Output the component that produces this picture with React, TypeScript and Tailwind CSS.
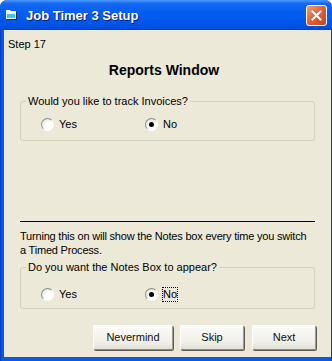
import React from "react";

function Radio({ label, checked, focused }: { label: string; checked?: boolean; focused?: boolean }) {
  return (
    <label className="flex items-center gap-[5px] h-[14px]">
      <span className="w-[13px] h-[13px] rounded-full border border-t-[#8f8d85] border-l-[#8f8d85] border-b-white border-r-white bg-[radial-gradient(circle_at_70%_70%,#ffffff_40%,#dcdad2)] flex items-center justify-center">
        {checked && <span className="w-[5px] h-[5px] rounded-full bg-black" />}
      </span>
      <span className={focused ? "outline outline-1 outline-dotted outline-black leading-[13px]" : "leading-[13px]"}>{label}</span>
    </label>
  );
}

function Group({ title, children, rowTop }: { title: string; children: React.ReactNode; rowTop: string }) {
  return (
    <fieldset className="border border-[#d0d0bf] rounded-[3px] mx-[16px] w-[295px]">
      <legend className="ml-[5px] px-[2px] leading-[14px]">{title}</legend>
      <div className={`flex pl-[20px] ${rowTop}`}>{children}</div>
    </fieldset>
  );
}

function XpButton({ children, w }: { children: React.ReactNode; w: string }) {
  return (
    <button className={`${w} h-[25px] bg-[linear-gradient(to_bottom,#fbfbf9,#f0efe8_70%,#e3e1d6)] border border-t-white border-l-white border-r-[#9d9b90] border-b-[#8a887e] shadow-[1px_1px_0_#5f5d55] rounded-[2px] text-[11px] font-normal text-[#111]`}>
      {children}
    </button>
  );
}

export default function App() {
  return (
    <div className="w-[332px] h-[361px] flex flex-col rounded-t-[7px] bg-[#0842d4] overflow-hidden font-['Liberation_Sans',Arial,sans-serif] text-black text-[11px]">
      {/* title bar */}
      <div className="h-[30px] shrink-0 flex items-center pl-[6px] pr-[5px] bg-[linear-gradient(to_bottom,#4a98ff,#1468f0_12%,#0860f2_35%,#0058ee_65%,#0052e4_88%,#0042cf)]">
        <svg width="12" height="11" viewBox="0 0 12 11" className="shrink-0">
          <path d="M1 1h4l1 1h5v8H1z" fill="#1b2a5c" />
          <path d="M0 0h4l1 1h5v8H0z" fill="#ffffff" />
          <path d="M1 3h8v5H1z" fill="#38c8e8" />
          <path d="M1 3h8v1H1z" fill="#e8fbff" />
        </svg>
        <span className="ml-[8px] mt-[1px] text-white font-bold text-[13px] [text-shadow:1px_1px_0_#0a1c7a]">Job Timer 3 Setup</span>
        <div className="ml-auto w-[21px] h-[21px] rounded-[3px] border border-white bg-[linear-gradient(135deg,#f0a07e,#e2643a_45%,#c8401c)] flex items-center justify-center">
          <svg width="11" height="11" viewBox="0 0 11 11">
            <path d="M1.5 1.5l8 8M9.5 1.5l-8 8" stroke="#fff" strokeWidth="2" strokeLinecap="square" />
          </svg>
        </div>
      </div>
      {/* client area */}
      <div className="flex-1 flex px-[4px] pb-[4px] bg-[linear-gradient(to_right,#0835c0,#0a5ae8_2px,#0a5ae8_calc(100%-2px),#0835c0)]">
        <div className="flex-1 flex flex-col bg-[#ece9d8] pt-[7px]">
          <div className="pl-[4px] leading-[14px]">Step 17</div>
          <div className="mt-[11px] text-center pr-[7px] font-bold text-[14px] leading-[16px]">Reports Window</div>
          <div className="mt-[16px]">
            <Group title="Would you like to track Invoices?" rowTop="mt-[9px] mb-[9px]">
              <div className="w-[104px]"><Radio label="Yes" /></div>
              <Radio label="No" checked />
            </Group>
          </div>
          <div className="mt-[80px] mx-[16px] h-px bg-black" />
          <p className="mt-[7px] mx-[16px] leading-[14px] tracking-[-0.2px]">
            Turning this on will show the Notes box every time you switch a Timed Process.
          </p>
          <div className="mt-[3px]">
            <Group title="Do you want the Notes Box to appear?" rowTop="mt-[13px] mb-[7px]">
              <div className="w-[104px]"><Radio label="Yes" /></div>
              <Radio label="No" checked focused />
            </Group>
          </div>
          <div className="mt-auto mb-[7px] flex justify-end gap-[7px] pr-[15px]">
            <XpButton w="w-[80px]">Nevermind</XpButton>
            <XpButton w="w-[64px]">Skip</XpButton>
            <XpButton w="w-[64px] ml-[1px]">Next</XpButton>
          </div>
        </div>
      </div>
    </div>
  );
}
